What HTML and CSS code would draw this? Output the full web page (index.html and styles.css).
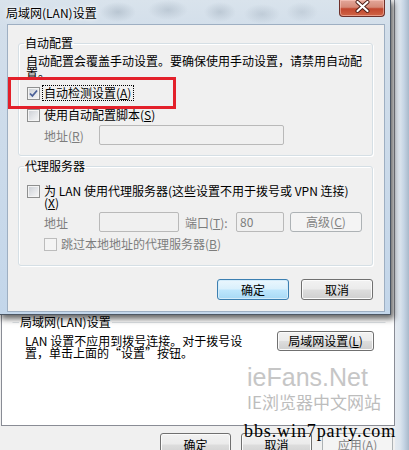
FILE: index.html
```html
<!DOCTYPE html>
<html lang="zh-CN">
<head>
  <meta charset="UTF-8">
  <meta name="viewport" content="width=device-width, initial-scale=1.0">
  <title>局域网(LAN)设置</title>
  <link rel="stylesheet" href="styles.css">
</head>
<body>
  <div class="screen">
    <!-- Internet Options window behind the dialog -->
    <div class="back">
      <div class="back-body">
        <div class="back-panel">
          <fieldset class="back-group">
            <legend>局域网(LAN)设置</legend>
            <div class="back-row">
              <p class="back-note">LAN 设置不应用到拨号连接。对于拨号设<br>置，单击上面的“设置”按钮。</p>
              <button class="btn lan-btn">局域网设置(<u>L</u>)</button>
            </div>
          </fieldset>
        </div>
        <div class="back-buttons">
          <button class="btn back-btn">确定</button>
          <button class="btn back-btn">取消</button>
          <button class="btn back-btn" disabled>应用(<u>A</u>)</button>
        </div>
      </div>
      <div class="back-frame"></div>
    </div>

    <!-- LAN settings dialog -->
    <div class="dialog">
      <div class="titlebar">
        <span class="title">局域网(LAN)设置</span>
        <span class="close">
          <svg width="46" height="17" viewBox="0 0 46 17">
            <path d="M18.5 3 L28.5 12 M28.5 3 L18.5 12" stroke="#4b1c16" stroke-width="4" stroke-linecap="round"/>
            <path d="M18.5 3 L28.5 12 M28.5 3 L18.5 12" stroke="#fff" stroke-width="2.2" stroke-linecap="round"/>
          </svg>
        </span>
      </div>

      <div class="client">
        <fieldset class="group group-auto">
          <legend>自动配置</legend>
          <p class="note">自动配置会覆盖手动设置。要确保使用手动设置，请禁用自动配<br>置。</p>
          <label class="check first">
            <span class="box">
              <svg width="11" height="11" viewBox="0 0 11 11"><path d="M2 5.5 L4.4 8 L9 2.5" fill="none" stroke="#4a5f97" stroke-width="1.8"/></svg>
            </span>
            <span class="focus">自动检测设置(<u>A</u>)</span>
          </label>
          <label class="check second">
            <span class="box"></span>
            <span>使用自动配置脚本(<u>S</u>)</span>
          </label>
          <div class="field">
            <span class="field-label dim">地址(<u>R</u>)</span>
            <span class="input script-input"></span>
          </div>
        </fieldset>

        <fieldset class="group group-proxy">
          <legend>代理服务器</legend>
          <label class="check proxy">
            <span class="box"></span>
            <span class="two-line">为 LAN 使用代理服务器(这些设置不用于拨号或 VPN 连接)<br>(<u>X</u>)</span>
          </label>
          <div class="field proxy-field">
            <span class="field-label dim">地址</span>
            <span class="input addr-input"></span>
            <span class="port-label dim">端口(<u>T</u>):</span>
            <span class="input port-input">80</span>
            <button class="btn adv-btn" disabled>高级(<u>C</u>)</button>
          </div>
          <label class="check skip">
            <span class="box off"></span>
            <span class="dim">跳过本地地址的代理服务器(<u>B</u>)</span>
          </label>
        </fieldset>

        <div class="actions">
          <button class="btn default">确定</button>
          <button class="btn">取消</button>
        </div>
      </div>
    </div>

    <div class="watermark">
      <div class="wm-big">ieFans.Net</div>
      <div class="wm-small">IE浏览器中文网站</div>
    </div>
    <div class="site">bbs.win7party.com</div>
    <div class="mark"></div>
  </div>
</body>
</html>
```

FILE: styles.css
```css
* {
  box-sizing: border-box;
}
body {
  margin: 0;
  background: #fff;
  font-family: "Noto Sans CJK SC", sans-serif;
  font-size: 12px;
  color: #000;
}
.screen {
  position: relative;
  width: 409px;
  height: 450px;
  overflow: hidden;
}
u {
  text-decoration: underline;
}

/* buttons */
.btn {
  font-family: "Noto Sans CJK SC", sans-serif;
  font-size: 12px;
  color: #000;
  width: 72px;
  height: 21px;
  padding: 0;
  border: 1px solid #707070;
  border-radius: 3px;
  background: linear-gradient(#f2f2f2 0%, #ebebeb 48%, #dddddd 52%, #cfcfcf 100%);
  box-shadow: inset 0 0 0 1px #fbfbfb;
  line-height: 1;
}
.btn.default {
  border-color: #3c7fb1;
  background: linear-gradient(#eaf6fd 0%, #d9f0fc 48%, #bee6fd 52%, #a7d9f5 100%);
  box-shadow: inset 0 0 0 1px #d4ecfa;
}
.btn:disabled {
  color: #838383;
  border-color: #adb2b5;
  background: #f4f4f4;
  box-shadow: none;
}

/* window behind */
.back {
  display: flex;
  height: 450px;
}
.back-body {
  width: 395px;
  display: flex;
  flex-direction: column;
  background: #f0f0f0;
  padding-left: 1px;
}
.back-panel {
  flex: 1;
  background: #fff;
  border: 1px solid #898c95;
  border-top: none;
  padding: 315px 8px 0 10px;
}
.back-group {
  margin: 0;
  border: 1px solid transparent;
  border-top-color: #dfe3e7;
  padding: 6px 11px 20px 12px;
}
.back-group legend {
  margin-left: -6px;
  padding: 0 1px;
  line-height: 14px;
}
.back-row {
  display: flex;
  justify-content: space-between;
  align-items: flex-start;
}
.back-note {
  margin: 0;
  line-height: 12px;
}
.lan-btn {
  width: 97px;
  height: 20px;
  margin-top: -4px;
}
.back-buttons {
  height: 24px;
  display: flex;
  justify-content: flex-end;
  gap: 10px;
  padding: 7px 2px 0 0;
}
.back-btn {
  width: 71px;
  height: 23px;
}
.back-frame {
  flex: 1;
  background: linear-gradient(90deg, #e4eaf1 0, #dce5ee 5px, #c5d4e4 9px, #a9b9ca 14px);
}

/* dialog */
.dialog {
  position: absolute;
  left: 0;
  top: 0;
  width: 391px;
  height: 315px;
  display: flex;
  flex-direction: column;
  background: linear-gradient(#d9e3ec 0, #d2deea 30px, #c3d6ea 100%);
  border-right: 1px solid rgba(30, 40, 55, 0.75);
  border-bottom: 1px solid rgba(30, 40, 55, 0.75);
  box-shadow: 2px 3px 6px 1px rgba(0, 0, 0, 0.6);
}
.titlebar {
  height: 24px;
  flex: none;
  display: flex;
  justify-content: space-between;
  align-items: flex-start;
  padding: 0 5px 0 6px;
  background:
    radial-gradient(ellipse 18px 10px at 118px 12px, rgba(150, 165, 180, 0.45), transparent),
    radial-gradient(ellipse 20px 10px at 168px 10px, rgba(150, 165, 180, 0.4), transparent),
    radial-gradient(ellipse 16px 10px at 220px 12px, rgba(150, 165, 180, 0.4), transparent),
    radial-gradient(ellipse 18px 10px at 262px 14px, rgba(150, 165, 180, 0.35), transparent),
    radial-gradient(ellipse 16px 10px at 302px 12px, rgba(150, 165, 180, 0.3), transparent);
}
.title {
  padding-top: 6px;
  line-height: 14px;
  text-shadow: 0 0 6px #fff, 0 0 3px #fff;
}
.close {
  width: 46px;
  height: 17px;
  border: 1px solid #6e302a;
  border-top: none;
  border-radius: 0 0 4px 4px;
  background: linear-gradient(#e3a79a 0%, #d58a78 45%, #c2472f 55%, #cf6546 100%);
  box-shadow: inset 0 0 0 1px rgba(255, 210, 200, 0.5);
}
.close svg {
  display: block;
  margin: -1px 0 0 -1px;
}
.client {
  height: 288px;
  flex: none;
  margin: 0 5px 0 7px;
  background: #f0f0f0;
  border: 1px solid #9eafc2;
  padding: 0 11px 0 10px;
}

/* group boxes */
.group {
  margin: 0;
  border: 1px solid #d5dfe5;
  border-radius: 3px;
  box-shadow: inset 1px 1px 0 #fff, 1px 1px 0 #fff;
  padding: 5px 7px 10px 8px;
}
.group legend {
  margin-left: -3px;
  padding: 0 1px;
  line-height: 14px;
}
.group-auto {
  margin-top: 11px;
}
.group-proxy {
  margin-top: 3px;
  padding-top: 12px;
  padding-bottom: 14px;
}
.note {
  margin: 0 0 0 -1px;
  line-height: 12px;
}
.dim {
  color: #7d7d7d;
}

/* checkboxes */
.check {
  display: flex;
  align-items: center;
  gap: 4px;
  height: 14px;
  line-height: 12px;
}
.check.first {
  margin-top: 7px;
}
.check.second {
  margin-top: 8px;
}
.check.proxy {
  height: auto;
  align-items: flex-start;
}
.check.skip {
  margin-top: 5px;
  padding-left: 17px;
}
.box {
  width: 13px;
  height: 13px;
  flex: none;
  border: 1px solid #8e8f8f;
  background: linear-gradient(135deg, #c9cdd3 0%, #e4e6e9 55%, #f7f7f7 100%);
  box-shadow: inset 0 0 0 1px #f4f4f4;
}
.box svg {
  display: block;
}
.box.off {
  border-color: #bcbcbc;
  background: #f4f4f4;
  box-shadow: none;
}
.focus {
  outline: 1px dotted #000;
  outline-offset: 1px;
  padding-right: 1px;
}
.two-line {
  line-height: 12px;
}

/* address fields */
.field {
  display: flex;
  align-items: center;
  height: 20px;
  margin-top: 3px;
  padding-left: 17px;
}
.field-label {
  width: 55px;
}
.input {
  height: 20px;
  border: 1px solid #b9b9b9;
  border-radius: 2px;
  background: #f0f0f0;
  color: #7d7d7d;
  line-height: 18px;
  padding-left: 3px;
}
.script-input {
  width: 185px;
}
.addr-input {
  width: 80px;
}
.port-label {
  width: 51px;
  margin-left: 6px;
}
.port-input {
  width: 48px;
}
.adv-btn {
  height: 20px;
  margin-left: 6px;
}

.actions {
  display: flex;
  justify-content: flex-end;
  gap: 12px;
  margin-top: 13px;
}

/* overlays */
.watermark {
  position: absolute;
  left: 247px;
  top: 365px;
}
.wm-big {
  font-family: "Liberation Sans", Arial, sans-serif;
  font-size: 25px;
  line-height: 25px;
  color: #c6c6c6;
}
.wm-small {
  margin-top: 3px;
  font-size: 17px;
  line-height: 18px;
  color: #bdbdbd;
}
.site {
  position: absolute;
  left: 244px;
  top: 422px;
  font-family: "Liberation Serif", "Times New Roman", serif;
  font-size: 18px;
  line-height: 18px;
  letter-spacing: 0.9px;
  color: #000;
}
.mark {
  position: absolute;
  left: 8px;
  top: 77px;
  width: 168px;
  height: 32px;
  border: 3px solid #e3202a;
}
```
